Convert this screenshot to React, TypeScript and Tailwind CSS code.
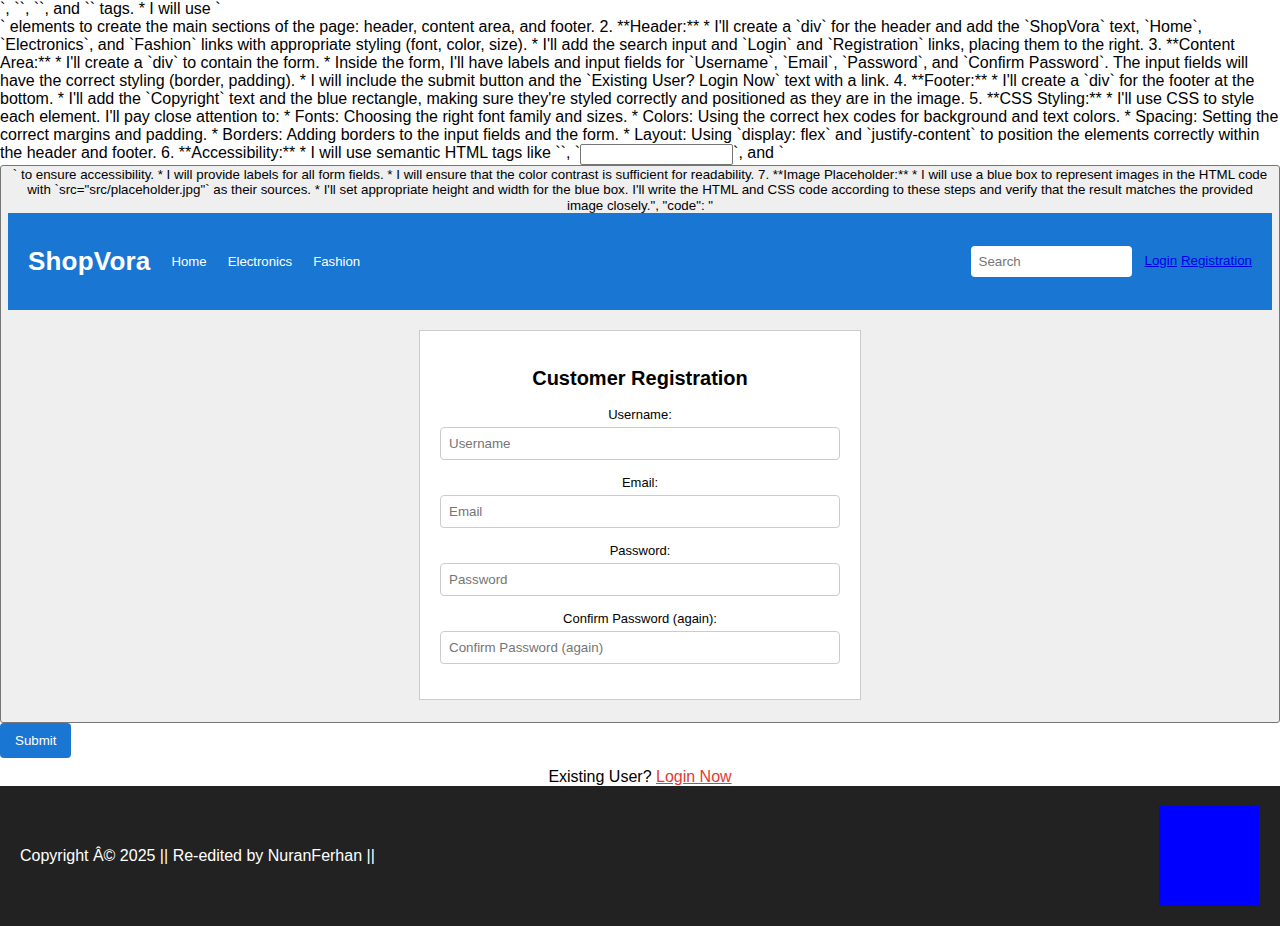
import React from "react";

const topLines = [
  "`, ``, ``, and `` tags. * I will use `",
  "` elements to create the main sections of the page: header, content area, and footer. 2. **Header:** * I'll create a `div` for the header and add the `ShopVora` text, `Home`,",
  "`Electronics`, and `Fashion` links with appropriate styling (font, color, size). * I'll add the search input and `Login` and `Registration` links, placing them to the right. 3. **Content",
  "Area:** * I'll create a `div` to contain the form. * Inside the form, I'll have labels and input fields for `Username`, `Email`, `Password`, and `Confirm Password`. The input fields will",
  "have the correct styling (border, padding). * I will include the submit button and the `Existing User? Login Now` text with a link. 4. **Footer:** * I'll create a `div` for the footer at the",
  "bottom. * I'll add the `Copyright` text and the blue rectangle, making sure they're styled correctly and positioned as they are in the image. 5. **CSS Styling:** * I'll use CSS to style",
  "each element. I'll pay close attention to: * Fonts: Choosing the right font family and sizes. * Colors: Using the correct hex codes for background and text colors. * Spacing: Setting the",
  "correct margins and padding. * Borders: Adding borders to the input fields and the form. * Layout: Using `display: flex` and `justify-content` to position the elements correctly within",
];

const boxLines = [
  "` to ensure accessibility. * I will provide labels for all form fields. * I will ensure that the color contrast is sufficient for readability. 7. **Image Placeholder:** * I will use a blue box to represent images in the HTML code",
  "with `src=\"src/placeholder.jpg\"` as their sources. * I'll set appropriate height and width for the blue box. I'll write the HTML and CSS code according to these steps and verify that the result matches the provided",
  "image closely.\", \"code\": \"",
];

const fields = [
  { label: "Username:", ph: "Username", type: "text" },
  { label: "Email:", ph: "Email", type: "email" },
  { label: "Password:", ph: "Password", type: "password" },
  { label: "Confirm Password (again):", ph: "Confirm Password (again)", type: "password" },
];

export default function App() {
  return (
    <div className="font-['Liberation_Sans',Arial,sans-serif] text-black bg-white w-[1280px]">
      <div className="text-[16px] leading-[18px]">
        {topLines.map((l, i) => (
          <div key={i} className="whitespace-pre h-[18px]">
            {l}
          </div>
        ))}
        <div className="flex items-start h-[21px] whitespace-pre">
          <span className="leading-[18px]">
            the header and footer. 6. **Accessibility:** * I will use semantic HTML tags like ``, `
          </span>
          <input
            type="text"
            className="w-[153px] h-[21px] border border-[#767676] rounded-[2px] bg-white"
          />
          <span className="leading-[18px]">`, and `</span>
        </div>
      </div>

      <div className="border border-[#767676] rounded-[3px] bg-[#efefef] px-[7px] pt-[1px] pb-0 text-center">
        <div className="text-[13.33px] leading-[15.33px]">
          {boxLines.map((l, i) => (
            <div key={i} className="whitespace-pre">
              {l}
            </div>
          ))}
        </div>

        <header className="bg-[#1976d2] h-[97px] px-5 flex items-center justify-between text-white">
          <div className="flex items-center">
            <span className="text-[26px] font-bold leading-[30px] tracking-[0.2px]">ShopVora</span>
            <nav className="flex items-center text-[13.2px] ml-[21px] gap-[21px]">
              <a>Home</a>
              <a>Electronics</a>
              <a>Fashion</a>
            </nav>
          </div>
          <div className="flex items-center">
            <input
              type="text"
              placeholder="Search"
              className="w-[161px] h-[31px] rounded-[4px] bg-white px-2 text-[13.33px] text-black placeholder:text-[#757575] outline-none"
            />
            <span className="ml-[13px] text-[13.33px]">
              <a href="#" className="text-[#0000ee] underline">Login</a>{" "}
              <a href="#" className="text-[#0000ee] underline">Registration</a>
            </span>
          </div>
        </header>

        <div className="flex justify-center pt-5 pb-[22px]">
          <div className="w-[442px] bg-white border border-[#cccccc] p-5">
            <h2 className="text-[20px] font-bold leading-[23px] mt-[16px] mb-[17px]">
              Customer Registration
            </h2>
            {fields.map((f) => (
              <div key={f.label} className="mb-[15px]">
                <div className="text-[13px] leading-[15px]">{f.label}</div>
                <input
                  type={f.type}
                  placeholder={f.ph}
                  className="mt-[5px] w-[400px] h-[33px] border border-[#cccccc] rounded-[4px] px-2 text-[13.33px] placeholder:text-[#757575] bg-white outline-none block"
                />
              </div>
            ))}
          </div>
        </div>
      </div>

      <button className="bg-[#1976d2] text-white text-[13.33px] leading-[15px] px-[15px] py-[10px] rounded-[4px] block">
        Submit
      </button>

      <p className="text-center text-[16px] leading-[18px] mt-[10px]">
        Existing User?{" "}
        <a href="#" className="text-[#e53935] underline">
          Login Now
        </a>
      </p>

      <footer className="bg-[#222222] h-[140px] pl-5 pr-[21px] flex items-center justify-between text-white text-[16px]">
        <span>Copyright Â© 2025 || Re-edited by NuranFerhan ||</span>
        <div className="w-[100px] h-[100px] bg-[#0000ff]" />
      </footer>
    </div>
  );
}
